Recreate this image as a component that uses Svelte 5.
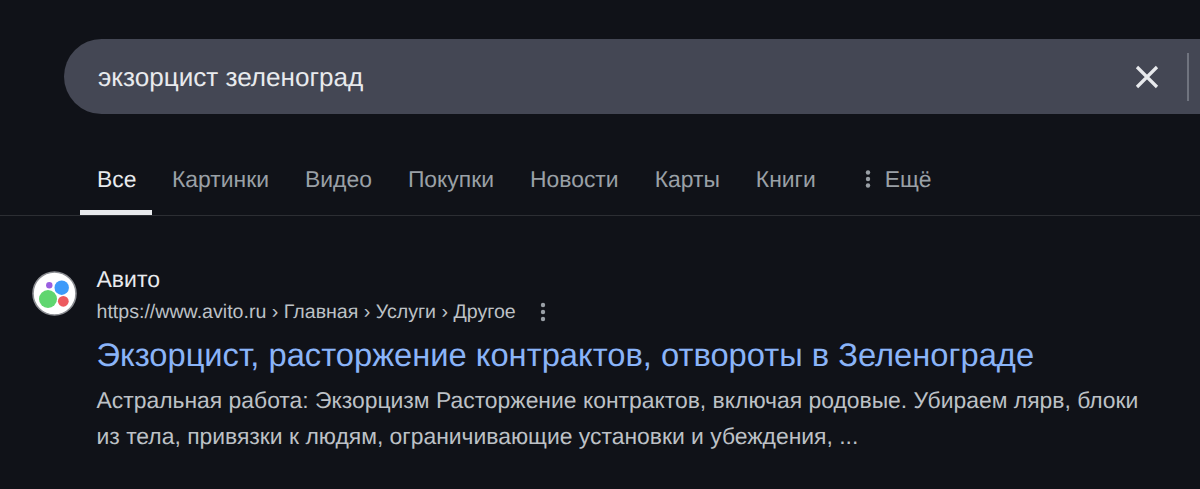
<script>
  const tabs = ['Картинки', 'Видео', 'Покупки', 'Новости', 'Карты', 'Книги'];
</script>

<div class="page">
  <div class="search">
    <span class="query">экзорцист зеленоград</span>
    <svg class="close" width="24" height="24" viewBox="0 0 24 24" aria-hidden="true">
      <path d="M2 2 L22 22 M22 2 L2 22" stroke="#e8eaed" stroke-width="3.2" fill="none" />
    </svg>
    <span class="divider"></span>
  </div>

  <nav class="tabs">
    <span class="tab active">Все</span>
    {#each tabs as t}
      <span class="tab">{t}</span>
    {/each}
    <span class="tab more">
      <svg width="6" height="18" viewBox="0 0 6 18" aria-hidden="true">
        <circle cx="3" cy="2.5" r="2.2" /><circle cx="3" cy="9" r="2.2" /><circle cx="3" cy="15.5" r="2.2" />
      </svg>
      Ещё
    </span>
  </nav>

  <section class="result">
    <div class="head">
      <div class="favicon">
        <svg width="45" height="45" viewBox="0 0 45 45" aria-hidden="true">
          <circle cx="22.5" cy="22.5" r="21.5" fill="#fff" stroke="#8d8f94" stroke-width="1.6" />
          <circle cx="16" cy="28" r="9" fill="#5fd66f" />
          <circle cx="29.7" cy="16.7" r="7.2" fill="#3d9bfa" />
          <circle cx="31.3" cy="30.3" r="5.4" fill="#ed5a5f" />
          <circle cx="17.3" cy="14.3" r="3.2" fill="#9a5fe0" />
        </svg>
      </div>
      <div class="source">
        <div class="site">Авито</div>
        <div class="crumbs">
          <span>https://www.avito.ru › Главная › Услуги › Другое</span>
          <svg width="6" height="20" viewBox="0 0 6 20" aria-hidden="true">
            <circle cx="3" cy="3" r="2.2" /><circle cx="3" cy="10" r="2.2" /><circle cx="3" cy="17" r="2.2" />
          </svg>
        </div>
      </div>
    </div>
    <h3 class="title">Экзорцист, расторжение контрактов, отвороты в Зеленограде</h3>
    <p class="snippet">Астральная работа: Экзорцизм Расторжение контрактов, включая родовые. Убираем лярв, блоки из тела, привязки к людям, ограничивающие установки и убеждения, ...</p>
  </section>
</div>

<style>
  :global(body) {
    margin: 0;
    background: #101218;
  }
  .page {
    width: 1200px;
    height: 489px;
    overflow: hidden;
    background: #101218;
    font-family: "Liberation Sans", Arial, sans-serif;
    text-rendering: geometricPrecision;
    padding-top: 39px;
    box-sizing: border-box;
  }
  .search {
    margin-left: 64px;
    width: 1180px;
    height: 75px;
    border-radius: 37.5px;
    background: #444754;
    display: flex;
    align-items: center;
    padding-left: 34px;
    box-sizing: border-box;
  }
  .query {
    flex: 1;
    color: #e8eaed;
    font-size: 26.1px;
    line-height: 30px;
  }
  .close {
    margin-right: 28px;
  }
  .divider {
    width: 2px;
    height: 48px;
    background: #70747f;
    margin-right: 55px;
  }
  .tabs {
    margin-top: 43px;
    height: 58px;
    padding-left: 80px;
    display: flex;
    border-bottom: 1px solid #2c2e33;
  }
  .tab {
    padding: 0 18px;
    height: 58px;
    box-sizing: border-box;
    line-height: 44px;
    font-size: 22.9px;
    color: #9aa0a6;
    white-space: nowrap;
  }
  .tab.active {
    color: #e8eaed;
    border-bottom: 5px solid #e8eaed;
    width: 72px;
    margin-right: 2px;
    padding: 0 0 0 17px;
  }
  .more {
    margin-left: 13px;
    display: flex;
    align-items: flex-start;
    gap: 14px;
  }
  .more svg {
    fill: #9aa0a6;
    margin-top: 13px;
  }
  .result {
    padding: 52px 0 0 32px;
  }
  .head {
    display: flex;
    gap: 19.5px;
    align-items: flex-start;
  }
  .favicon {
    width: 45px;
    height: 45px;
    display: flex;
    margin-top: 3px;
  }
  .source {
    display: flex;
    flex-direction: column;
    margin-top: -4px;
  }
  .site {
    color: #e8eaed;
    font-size: 23px;
    line-height: 30px;
  }
  .crumbs {
    display: flex;
    align-items: center;
    gap: 24px;
    color: #bdc1c6;
    font-size: 19.6px;
    line-height: 28px;
    margin-top: 4px;
  }
  .crumbs svg {
    fill: #9aa0a6;
  }
  .title {
    margin: 10px 0 0;
    padding-left: 64.5px;
    font-weight: 400;
    font-size: 32.7px;
    line-height: 38px;
    color: #8ab4f8;
  }
  .snippet {
    margin: 8px 0 0;
    padding-left: 64.5px;
    width: 1050px;
    font-size: 22.9px;
    line-height: 36px;
    color: #bdc1c6;
  }
</style>
